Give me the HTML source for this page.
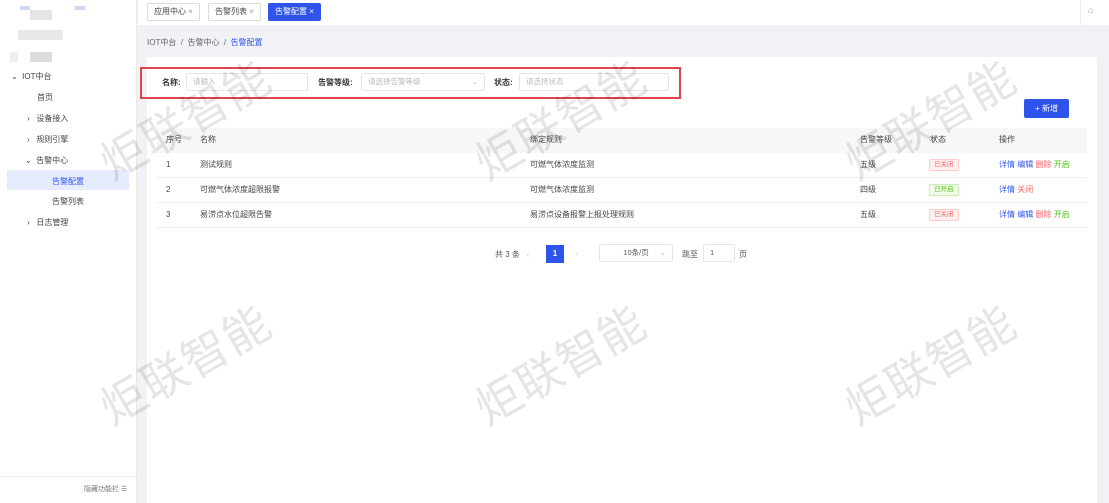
<!DOCTYPE html>
<html><head><meta charset="utf-8"><style>
*{margin:0;padding:0;box-sizing:border-box}
body{width:1109px;height:503px;overflow:hidden;background:#f0f2f5;font-family:"Liberation Sans","Noto Sans CJK SC",sans-serif;font-size:8px;color:#444;position:relative}
.abs{position:absolute}
.side{left:0;top:0;width:137px;height:503px;background:#fff;border-right:1px solid #e8e8e8}
.mi{position:absolute;font-size:8px;color:#444}
.top{left:138px;top:0;width:971px;height:25px;background:#fff}
.tab{position:absolute;top:3px;height:18px;border:1px solid #ddd;border-radius:2px;font-size:8px;line-height:16px;padding:0 6px;color:#444;background:#fff}
.tab.act{background:#2f54eb;color:#fff;border-color:#2f54eb}
.card{left:147px;top:57px;width:950px;height:446px;background:#fff}
.inp{position:absolute;height:18px;border:1px solid #e5e5e5;border-radius:2px;color:#bbb;font-size:7.5px;line-height:16px;padding-left:6px}
.lab{position:absolute;font-size:8px;font-weight:bold;color:#333}
.row{position:absolute;left:157px;width:930px;height:25px;border-bottom:1px solid #eee;line-height:24px}
.row span{position:absolute;font-size:8px;color:#444}
.tag{position:absolute;top:6px;height:12px;line-height:10px;font-size:6.5px;padding:0 4px;border-radius:2px;border:1px solid}
.off{color:#f5656b;background:#fff0f0;border-color:#fcc}
.on{color:#52c41a;background:#f0fbe8;border-color:#c6eeb0}
.wm{position:absolute;font-size:46px;color:rgba(0,0,0,0.10);transform:rotate(-30deg);white-space:nowrap;letter-spacing:1px}
</style></head><body>
<div class="abs side">
<div class="abs" style="left:20px;top:6px;width:10px;height:4px;background:#cfd8f0"></div>
<div class="abs" style="left:75px;top:6px;width:10px;height:4px;background:#cfd8f0"></div>
<div class="abs" style="left:30px;top:10px;width:22px;height:10px;background:#e4e4e4"></div>
<div class="abs" style="left:18px;top:30px;width:45px;height:10px;background:#e8e8e8"></div>
<div class="abs" style="left:30px;top:52px;width:22px;height:10px;background:#ddd"></div>
<div class="abs" style="left:10px;top:52px;width:8px;height:10px;background:#eee"></div>
<div class="mi" style="left:11px;top:71px">⌄&nbsp; IOT中台</div>
<div class="mi" style="left:37px;top:92px">首页</div>
<div class="mi" style="left:27px;top:113px">›&nbsp;&nbsp; 设备接入</div>
<div class="mi" style="left:27px;top:134px">›&nbsp;&nbsp; 规则引擎</div>
<div class="mi" style="left:25px;top:155px">⌄&nbsp; 告警中心</div>
<div class="abs" style="left:7px;top:170px;width:122px;height:20px;background:#e6ecfd"></div>
<div class="mi" style="left:52px;top:176px;color:#2f54eb">告警配置</div>
<div class="mi" style="left:52px;top:196px">告警列表</div>
<div class="mi" style="left:27px;top:217px">›&nbsp;&nbsp; 日志管理</div>
<div class="abs" style="left:0;top:476px;width:137px;height:1px;background:#eee"></div>
<div class="mi" style="left:84px;top:484px;color:#777;font-size:7px">隐藏功能栏 ☰</div>
</div>
<div class="abs top">
<div class="tab" style="left:9px">应用中心 <span style="color:#999">×</span></div>
<div class="tab" style="left:70px">告警列表 <span style="color:#999">×</span></div>
<div class="tab act" style="left:130px">告警配置 ×</div>
<div class="abs" style="left:942px;top:0;width:1px;height:25px;background:#eee"></div>
<div class="abs" style="left:950px;top:5px;color:#999;font-size:9px">⌂</div>
</div>
<div class="abs" style="left:147px;top:37px;font-size:8px;color:#666">IOT中台 &nbsp;/&nbsp; 告警中心 &nbsp;/&nbsp; <span style="color:#2f54eb">告警配置</span></div>
<div class="abs card"></div>
<div class="abs" style="left:140px;top:67px;width:541px;height:32px;border:2px solid #e0454b"></div>
<div class="lab" style="left:162px;top:77px">名称:</div>
<div class="inp" style="left:186px;top:73px;width:122px">请输入</div>
<div class="lab" style="left:318px;top:77px">告警等级:</div>
<div class="inp" style="left:361px;top:73px;width:124px">请选择告警等级<span style="position:absolute;right:6px;color:#bbb">⌄</span></div>
<div class="lab" style="left:494px;top:77px">状态:</div>
<div class="inp" style="left:519px;top:73px;width:150px">请选择状态</div>
<div class="abs" style="left:1024px;top:99px;width:45px;height:19px;background:#2f54eb;border-radius:2px;color:#fff;font-size:8px;line-height:19px;text-align:center">+ 新增</div>
<div class="row" style="top:128px;background:#f6f7f9;border:none"><span style="left:9px">序号</span><span style="left:43px">名称</span><span style="left:373px">绑定规则</span><span style="left:703px">告警等级</span><span style="left:773px">状态</span><span style="left:842px">操作</span></div>
<div class="row" style="top:153px"><span style="left:9px">1</span><span style="left:43px">测试规则</span><span style="left:373px">可燃气体浓度监测</span><span style="left:703px">五级</span><div class="tag off" style="left:772px">已关闭</div><span style="left:842px;color:#2f54eb">详情 编辑 <b style="font-weight:normal;color:#f5656b">删除</b> <b style="font-weight:normal;color:#52c41a">开启</b></span></div>
<div class="row" style="top:178px"><span style="left:9px">2</span><span style="left:43px">可燃气体浓度超限报警</span><span style="left:373px">可燃气体浓度监测</span><span style="left:703px">四级</span><div class="tag on" style="left:772px">已开启</div><span style="left:842px;color:#2f54eb">详情 <b style="font-weight:normal;color:#f5656b">关闭</b></span></div>
<div class="row" style="top:203px"><span style="left:9px">3</span><span style="left:43px">易涝点水位超限告警</span><span style="left:373px">易涝点设备报警上报处理规则</span><span style="left:703px">五级</span><div class="tag off" style="left:772px">已关闭</div><span style="left:842px;color:#2f54eb">详情 编辑 <b style="font-weight:normal;color:#f5656b">删除</b> <b style="font-weight:normal;color:#52c41a">开启</b></span></div>
<div class="abs" style="left:495px;top:249px;color:#555">共 3 条 &nbsp;&nbsp;<span style="color:#ccc">‹</span></div>
<div class="abs" style="left:546px;top:245px;width:18px;height:18px;background:#2f54eb;color:#fff;text-align:center;line-height:18px;font-weight:bold">1</div>
<div class="abs" style="left:576px;top:249px;color:#ccc">›</div>
<div class="inp" style="left:599px;top:244px;width:74px;color:#555;text-align:center;padding:0">10条/页<span style="position:absolute;right:6px;color:#bbb">⌄</span></div>
<div class="abs" style="left:682px;top:249px;color:#555">跳至</div>
<div class="inp" style="left:703px;top:244px;width:32px;color:#555">1</div>
<div class="abs" style="left:739px;top:249px;color:#555">页</div>
<div class="wm" style="left:90px;top:85px">炬联智能</div>
<div class="wm" style="left:465px;top:85px">炬联智能</div>
<div class="wm" style="left:835px;top:85px">炬联智能</div>
<div class="wm" style="left:90px;top:330px">炬联智能</div>
<div class="wm" style="left:465px;top:330px">炬联智能</div>
<div class="wm" style="left:835px;top:330px">炬联智能</div>
</body></html>
